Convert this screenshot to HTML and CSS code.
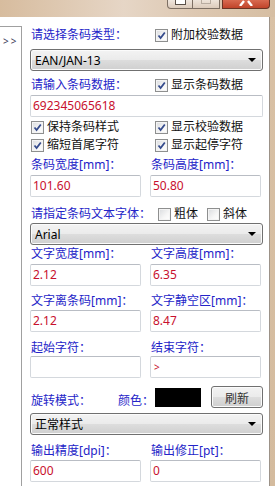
FILE: index.html
```
<!DOCTYPE html>
<html>
<head>
  <meta charset="UTF-8">
  <title>条码设置</title>
  <link rel="stylesheet" href="styles.css">
</head>
<body>
  <div class="titlebar">
    <div class="caption">
      <span class="cap cap-min"><i></i></span>
      <span class="cap cap-max"><i></i></span>
      <span class="cap cap-close">
        <svg width="14" height="6" viewBox="0 0 14 6"><path d="M1 6 L5 1 M13 6 L9 1" stroke="#fff" stroke-width="2.4" fill="none"/></svg>
      </span>
    </div>
  </div>

  <div class="client">
    <div class="side">
      <div class="side-box">&gt;&gt;</div>
    </div>

    <div class="panel">
      <div class="line-cb top">
        <span class="lbl">请选择条码类型：</span>
        <label class="cb"><span class="box on"></span>附加校验数据</label>
      </div>
      <div class="combo mt6"><span>EAN/JAN-13</span><b class="arrow"></b></div>

      <div class="line-cb mt6">
        <span class="lbl">请输入条码数据：</span>
        <label class="cb"><span class="box on"></span>显示条码数据</label>
      </div>
      <div class="field wide mt2">692345065618</div>

      <div class="line-cb pair mt2">
        <label class="cb"><span class="box on"></span>保持条码样式</label>
        <label class="cb"><span class="box on"></span>显示校验数据</label>
      </div>
      <div class="line-cb pair mt2">
        <label class="cb"><span class="box on"></span>缩短首尾字符</label>
        <label class="cb"><span class="box on"></span>显示起停字符</label>
      </div>

      <div class="row2 mt4">
        <span class="lbl">条码宽度[mm]：</span>
        <span class="lbl">条码高度[mm]：</span>
      </div>
      <div class="row2 mt2">
        <div class="field">101.60</div>
        <div class="field">50.80</div>
      </div>

      <div class="line-font mt9">
        <span class="lbl">请指定条码文本字体：</span>
        <label class="cb"><span class="box"></span>粗体</label>
        <label class="cb italic"><span class="box"></span>斜体</label>
      </div>
      <div class="combo mt1"><span>Arial</span><b class="arrow"></b></div>

      <div class="row2 mt1">
        <span class="lbl">文字宽度[mm]：</span>
        <span class="lbl">文字高度[mm]：</span>
      </div>
      <div class="row2 mt2">
        <div class="field">2.12</div>
        <div class="field">6.35</div>
      </div>

      <div class="row2 mt7">
        <span class="lbl">文字离条码[mm]：</span>
        <span class="lbl">文字静空区[mm]：</span>
      </div>
      <div class="row2 mt1">
        <div class="field">2.12</div>
        <div class="field">8.47</div>
      </div>

      <div class="row2 mt8">
        <span class="lbl">起始字符：</span>
        <span class="lbl">结束字符：</span>
      </div>
      <div class="row2">
        <div class="field"></div>
        <div class="field small">&gt;</div>
      </div>

      <div class="color-row mt8">
        <span class="lbl rot">旋转模式：</span>
        <span class="lbl">颜色：</span>
        <span class="swatch"></span>
        <button class="btn">刷新</button>
      </div>
      <div class="combo mt5"><span>正常样式</span><b class="arrow"></b></div>

      <div class="row2 mt8">
        <span class="lbl">输出精度[dpi]：</span>
        <span class="lbl">输出修正[pt]：</span>
      </div>
      <div class="row2 mt1">
        <div class="field">600</div>
        <div class="field">0</div>
      </div>
      <div class="row2 mt4">
        <div class="field"></div>
        <div class="field"></div>
      </div>
    </div>
  </div>
</body>
</html>
```

FILE: styles.css
```
body {
  margin: 0;
  width: 275px;
  height: 486px;
  overflow: hidden;
  background: linear-gradient(180deg, #d9c1a5 0%, #d4bb9e 100%);
  font-family: "Noto Sans", "Noto Sans CJK SC", sans-serif;
  font-size: 12px;
}

/* 标题栏 */
.titlebar {
  height: 17px;
  background: linear-gradient(90deg, #d7bc9e 0%, #e6d6c6 45%, #ddc8b2 70%, #d6bea2 100%);
}

.caption {
  display: flex;
  justify-content: flex-end;
  padding-right: 5px;
}

.cap {
  height: 9px;
  box-sizing: border-box;
  border: 1px solid #7d6f63;
  border-top: 0;
  display: flex;
  justify-content: center;
  align-items: flex-start;
}

.cap-min {
  width: 26px;
  border-radius: 0 0 0 4px;
  background: linear-gradient(180deg, #efe6de, #dccbbb);
}

.cap-min i {
  display: block;
  width: 9px;
  height: 4px;
  background: #fff;
  border: 1px solid #5a5048;
  border-top: 0;
  margin-left: 1px;
}

.cap-max {
  width: 27px;
  border-left: 0;
  background: linear-gradient(180deg, #eee4da, #dccbbb);
}

.cap-max i {
  display: block;
  width: 8px;
  height: 3px;
  border: 1px solid #b8aca0;
  border-top: 0;
}

.cap-close {
  width: 48px;
  margin-left: 2px;
  border-color: #6b3424;
  border-radius: 0 0 4px 0;
  background: linear-gradient(180deg, #d86a50, #c0442a);
}

/* 主体区域 */
.client {
  display: flex;
  width: 269px;
  height: 469px;
  background: #fff;
  border-right: 1px solid #9c9288;
}

.side {
  width: 22px;
  flex-shrink: 0;
  padding-top: 9px;
  box-sizing: border-box;
}

.side-box {
  height: 100%;
  box-sizing: border-box;
  border-top: 1px solid #a0a0a0;
  border-right: 1px solid #a0a0a0;
  color: #3c3c5a;
  font-size: 10px;
  line-height: 12px;
  padding-top: 8px;
  padding-left: 3px;
  letter-spacing: 2px;
  white-space: nowrap;
  overflow: hidden;
}

.panel {
  flex: 1;
  padding: 10px 8px 0 8px;
}

.lbl {
  color: #2424c8;
  line-height: 16px;
  white-space: nowrap;
  padding-left: 1px;
}

.mt1 { margin-top: 1px; }
.mt2 { margin-top: 2px; }
.mt4 { margin-top: 4px; }
.mt5 { margin-top: 5px; }
.mt6 { margin-top: 6px; }
.mt7 { margin-top: 7px; }
.mt8 { margin-top: 8px; }
.mt9 { margin-top: 9px; }

.line-cb {
  display: grid;
  grid-template-columns: 125px auto;
  height: 16px;
  align-items: center;
}

.line-cb.pair {
  padding-left: 1px;
  grid-template-columns: 124px auto;
}

.line-font {
  display: flex;
  align-items: center;
  height: 16px;
}

.line-font .cb {
  margin-left: 7px;
}

.line-font .italic {
  margin-left: 9px;
}

.cb {
  display: inline-flex;
  align-items: center;
  gap: 3px;
  color: #111;
  line-height: 16px;
  white-space: nowrap;
}

.box {
  width: 13px;
  height: 13px;
  box-sizing: border-box;
  border: 1px solid #8e8f8f;
  background: linear-gradient(135deg, #d9dbde 0%, #f6f6f6 60%, #fff 100%);
  box-shadow: inset 0 0 0 1px #f4f4f4;
}

.box.on {
  background:
    url("data:image/svg+xml;utf8,<svg xmlns='http://www.w3.org/2000/svg' width='11' height='11'><path d='M2.5 5.5 L4.6 8 L8.8 2.5' stroke='%23354b8c' stroke-width='1.8' fill='none'/></svg>") center / 11px 11px no-repeat,
    linear-gradient(135deg, #d9dbde 0%, #f6f6f6 60%, #fff 100%);
}

/* 下拉框 */
.combo {
  height: 22px;
  box-sizing: border-box;
  border: 1px solid #707070;
  border-radius: 3px;
  background: linear-gradient(180deg, #f3f3f3 0%, #ebebeb 48%, #dddddd 52%, #cfcfcf 100%);
  box-shadow: inset 0 0 0 1px #fbfbfb;
  display: flex;
  align-items: center;
  justify-content: space-between;
  padding: 0 6px 0 4px;
  color: #000;
  font-size: 12px;
}

.arrow {
  width: 0;
  height: 0;
  border-left: 4px solid transparent;
  border-right: 4px solid transparent;
  border-top: 4px solid #000;
}

/* 文本框 */
.field {
  height: 22px;
  box-sizing: border-box;
  border: 1px solid #d4d8dd;
  border-top-color: #b9bdc4;
  border-radius: 2px;
  color: #c8102e;
  line-height: 20px;
  padding-left: 2px;
  white-space: nowrap;
  overflow: hidden;
}

.field.small {
  font-size: 10px;
  padding-left: 3px;
}

.row2 {
  display: grid;
  grid-template-columns: 111px 111px;
  column-gap: 9px;
}

/* 颜色与刷新 */
.color-row {
  display: flex;
  align-items: flex-end;
  height: 22px;
}

.color-row .rot {
  width: 86px;
  margin-bottom: -3px;
}

.color-row .lbl {
  margin-bottom: -1px;
}

.swatch {
  width: 46px;
  height: 19px;
  background: #000;
  margin-bottom: 1px;
  margin-left: 1px;
}

.btn {
  width: 52px;
  height: 22px;
  margin-left: 10px;
  border: 1px solid #707070;
  border-radius: 3px;
  background: linear-gradient(180deg, #f3f3f3 0%, #ebebeb 48%, #dddddd 52%, #cfcfcf 100%);
  box-shadow: inset 0 0 0 1px #fbfbfb;
  font-family: "Noto Sans CJK SC", sans-serif;
  font-size: 12px;
  color: #333;
  padding: 0;
}
```
